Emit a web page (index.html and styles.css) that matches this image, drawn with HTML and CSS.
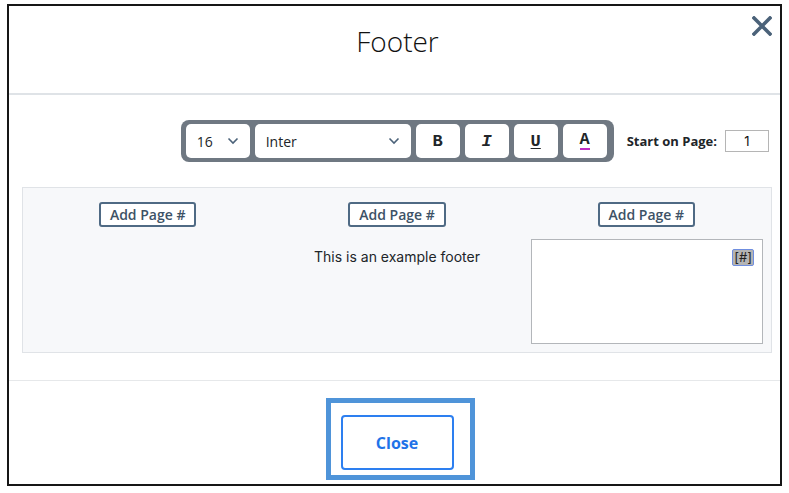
FILE: index.html
```html
<!DOCTYPE html>
<html lang="en">
  <head>
    <meta charset="UTF-8" />
    <meta name="viewport" content="width=device-width, initial-scale=1.0" />
    <title>Footer</title>
    <link rel="stylesheet" href="styles.css">
  </head>
  <body>
    <div class="modal">
      <div class="modal-header">
        <h2>Footer</h2>
        <button class="close-x" type="button" aria-label="Close">
          <svg width="20" height="20" viewBox="0 0 20 20">
            <path d="M2 2 L18 18 M18 2 L2 18" stroke="#4b6279" stroke-width="3.6" stroke-linecap="square" fill="none" />
          </svg>
        </button>
      </div>

      <div class="modal-body">
        <div class="toolbar-row">
          <div class="toolbar">
            <div class="tool select size">
              <span>16</span>
              <svg class="chev" width="12" height="8" viewBox="0 0 12 8"><path d="M1.5 1.5 L6 6 L10.5 1.5" stroke="#4b6279" stroke-width="1.6" fill="none" /></svg>
            </div>
            <div class="tool select family">
              <span>Inter</span>
              <svg class="chev" width="12" height="8" viewBox="0 0 12 8"><path d="M1.5 1.5 L6 6 L10.5 1.5" stroke="#4b6279" stroke-width="1.6" fill="none" /></svg>
            </div>
            <div class="tool fmt"><b>B</b></div>
            <div class="tool fmt"><i>I</i></div>
            <div class="tool fmt"><u>U</u></div>
            <div class="tool fmt"><span class="color-a">A</span></div>
          </div>
          <label class="start-page" for="start">Start on Page:</label>
          <input class="start-input" id="start" type="text" value="1" />
        </div>

        <div class="footer-editor">
          <div class="col">
            <button class="add-page" type="button">Add Page #</button>
          </div>
          <div class="col">
            <button class="add-page" type="button">Add Page #</button>
            <p class="footer-text">This is an example footer</p>
          </div>
          <div class="col">
            <button class="add-page" type="button">Add Page #</button>
            <div class="edit-box"><span class="token">[#]</span></div>
          </div>
        </div>
      </div>

      <div class="modal-footer">
        <div class="highlight">
          <button class="close-btn" type="button">Close</button>
        </div>
      </div>
    </div>
  </body>
</html>
```

FILE: styles.css
```css
body {
  margin: 0;
  padding: 0;
  background: #fff;
  font-family: "Open Sans", "Noto Sans", sans-serif;
  color: #212529;
}
.modal {
  margin: 4px 7px 0 7px;
  width: 771px;
  height: 478px;
  border: 2px solid #161616;
  background: #fff;
  display: flex;
  flex-direction: column;
}
.modal-header {
  position: relative;
  height: 87px;
  border-bottom: 2px solid #dfe3e7;
  display: flex;
  align-items: center;
  justify-content: center;
}
.modal-header h2 {
  margin: 0 0 18px 6px;
  font-size: 28px;
  font-weight: 300;
  color: #111;
}
.close-x {
  position: absolute;
  top: 10px;
  right: 8px;
  border: none;
  background: none;
  padding: 0;
  cursor: pointer;
}
.modal-body {
  flex: 1;
  padding: 25px 11px 0 13px;
}
.toolbar-row {
  display: flex;
  align-items: center;
  justify-content: flex-end;
}
.toolbar {
  display: flex;
  gap: 5px;
  padding: 4px 7px 4px 5px;
  background: #6f7882;
  border-radius: 8px;
  margin-right: 13px;
}
.tool {
  height: 34px;
  background: #fff;
  border-radius: 5px;
  display: flex;
  align-items: center;
  font-size: 14px;
  color: #212529;
}
.select {
  justify-content: space-between;
  padding: 0 11px;
}
.size {
  width: 42px;
}
.family {
  width: 134px;
}
.fmt {
  width: 44px;
  justify-content: center;
  font-family: "Liberation Mono", monospace;
  font-size: 17px;
  font-weight: bold;
}
.fmt u {
  text-decoration-thickness: 1px;
  text-underline-offset: 2px;
}
.color-a {
  border-bottom: 2px solid #c02bc4;
  line-height: 16px;
}
.start-page {
  font-size: 13px;
  font-weight: bold;
  margin-right: 8px;
}
.start-input {
  width: 36px;
  height: 16px;
  padding: 2px 3px;
  border: 1px solid #b5b5b5;
  font-family: "Inter", sans-serif;
  font-size: 13px;
  text-align: center;
  color: #111;
}
.footer-editor {
  margin: 25px 0 0 0;
  width: 748px;
  height: 164px;
  background: #f7f8fa;
  border: 1px solid #e0e3e7;
  display: grid;
  grid-template-columns: 1fr 1fr 1fr;
}
.col {
  display: flex;
  flex-direction: column;
  align-items: center;
  padding-top: 14px;
}
.add-page {
  height: 25px;
  padding: 0 9px;
  background: #fff;
  border: 2px solid #4f6a84;
  border-radius: 3px;
  color: #3d5266;
  font-family: "Open Sans", sans-serif;
  font-size: 14px;
  font-weight: 600;
}
.footer-text {
  margin: 21px 0 0 0;
  font-family: "Inter", sans-serif;
  font-size: 14px;
  color: #212529;
}
.edit-box {
  align-self: stretch;
  margin: 12px 8px 0 9px;
  height: 94px;
  background: #fff;
  border: 1px solid #b3b6ba;
  display: flex;
  justify-content: flex-end;
  align-items: flex-start;
  padding: 9px 8px 0 0;
}
.token {
  background: #b4b4b4;
  border: 1px solid #6f8ee0;
  border-radius: 2px;
  font-family: "Inter", sans-serif;
  font-size: 13px;
  color: #222;
  padding: 0 1px;
  line-height: 15px;
}
.modal-footer {
  height: 103px;
  border-top: 1px solid #e6e8ea;
  display: flex;
  justify-content: center;
  align-items: flex-start;
}
.highlight {
  margin: 17px 0 0 11px;
  border: 5px solid #4f94d9;
  padding: 12px 16px 5px 10px;
}
.close-btn {
  width: 113px;
  height: 55px;
  background: #fff;
  border: 2px solid #2d7ff0;
  border-radius: 4px;
  color: #1f73e8;
  font-family: "Open Sans", sans-serif;
  font-size: 16px;
  font-weight: bold;
}
```
